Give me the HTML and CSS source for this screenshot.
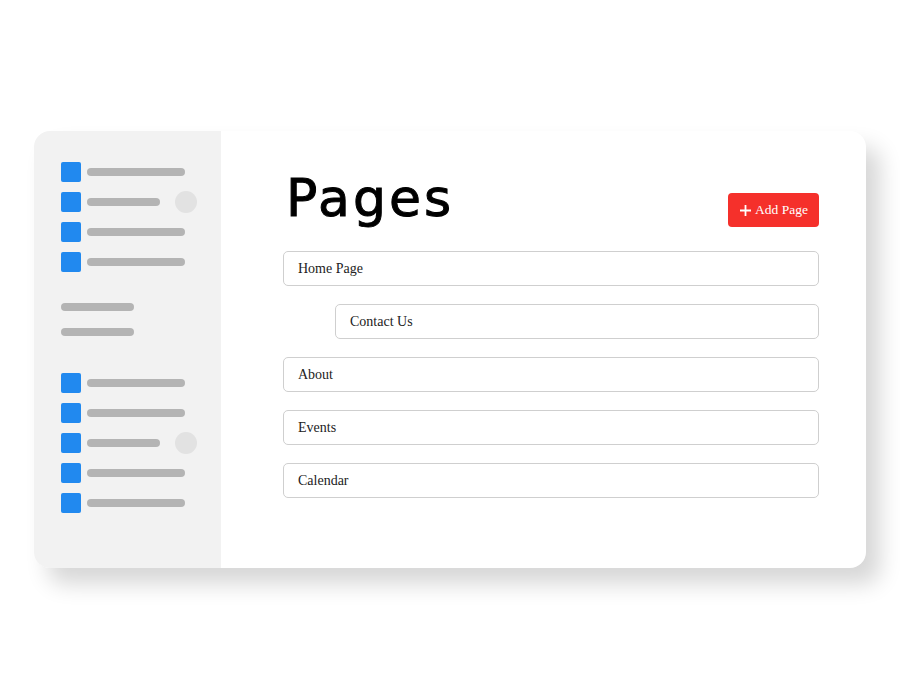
FILE: index.html
```html
<!DOCTYPE html>
<html>
<head>
<meta charset="utf-8">
<link rel="stylesheet" href="styles.css">
</head>
<body>
<div class="card">
  <aside class="sidebar">
    <div class="group">
      <div class="item"><span class="sq"></span><span class="bar"></span></div>
      <div class="item"><span class="sq"></span><span class="bar short"></span><span class="dot"></span></div>
      <div class="item"><span class="sq"></span><span class="bar"></span></div>
      <div class="item"><span class="sq"></span><span class="bar"></span></div>
    </div>
    <div class="plain">
      <span class="bar short"></span>
      <span class="bar short"></span>
    </div>
    <div class="group">
      <div class="item"><span class="sq"></span><span class="bar"></span></div>
      <div class="item"><span class="sq"></span><span class="bar"></span></div>
      <div class="item"><span class="sq"></span><span class="bar short"></span><span class="dot"></span></div>
      <div class="item"><span class="sq"></span><span class="bar"></span></div>
      <div class="item"><span class="sq"></span><span class="bar"></span></div>
    </div>
  </aside>
  <main class="main">
    <div class="header">
      <h1 class="title">Pages</h1>
      <button class="add">
        <svg width="13" height="13" viewBox="0 0 13 13"><path d="M6.5 1v11M1 6.5h11" stroke="#fff" stroke-width="1.8" fill="none"/></svg>
        <span>Add Page</span>
      </button>
    </div>
    <ul class="pages">
      <li class="page">Home Page</li>
      <li class="page child">Contact Us</li>
      <li class="page">About</li>
      <li class="page">Events</li>
      <li class="page">Calendar</li>
    </ul>
  </main>
</div>
</body>
</html>
```
FILE: styles.css
```css
html, body {
  margin: 0;
  padding: 0;
  background: #fff;
}
body {
  width: 900px;
  height: 700px;
  padding-top: 131px;
  padding-left: 34px;
  box-sizing: border-box;
  font-family: "Liberation Serif", serif;
}
.card {
  width: 832px;
  height: 437px;
  display: flex;
  background: #fff;
  border-radius: 16px;
  overflow: hidden;
  box-shadow: 14px 16px 22px rgba(0, 0, 0, 0.16);
}
.sidebar {
  width: 187px;
  flex: none;
  background: #f2f2f2;
  padding: 31px 0 0 27px;
  box-sizing: border-box;
  display: flex;
  flex-direction: column;
}
.group {
  display: flex;
  flex-direction: column;
  gap: 10px;
}
.item {
  display: flex;
  align-items: center;
  height: 20px;
}
.sq {
  width: 20px;
  height: 20px;
  border-radius: 2px;
  background: #2189ef;
  flex: none;
}
.bar {
  display: block;
  width: 98px;
  height: 8px;
  border-radius: 4px;
  background: #b4b4b4;
  margin-left: 6px;
}
.bar.short {
  width: 73px;
}
.dot {
  width: 22px;
  height: 22px;
  border-radius: 50%;
  background: #e2e2e2;
  margin-left: 15px;
}
.plain {
  display: flex;
  flex-direction: column;
  gap: 17px;
  margin: 31px 0 37px;
}
.plain .bar {
  margin-left: 0;
}
.main {
  flex: 1;
  padding: 41px 47px 0 62px;
}
.header {
  display: flex;
  justify-content: space-between;
  align-items: flex-start;
  margin-bottom: 24px;
}
.title {
  margin: 0 0 0 3px;
  font-family: "DejaVu Sans", sans-serif;
  font-weight: normal;
  font-size: 52px;
  line-height: 52px;
  letter-spacing: 3px;
  color: #000;
  -webkit-text-stroke: 1px #000;
}
.add {
  margin-top: 21px;
  width: 91px;
  height: 34px;
  border: none;
  border-radius: 4px;
  background: #f5302b;
  color: #fff;
  font-family: "Liberation Serif", serif;
  font-size: 13.5px;
  display: flex;
  align-items: center;
  justify-content: center;
  gap: 3px;
  padding: 0;
}
.pages {
  list-style: none;
  margin: 0;
  padding: 0;
  display: flex;
  flex-direction: column;
  gap: 18px;
}
.page {
  height: 35px;
  box-sizing: border-box;
  border: 1px solid #cfcfcf;
  border-radius: 5px;
  padding-left: 14px;
  display: flex;
  align-items: center;
  font-size: 14px;
  color: #222;
}
.page.child {
  margin-left: 52px;
}
```
